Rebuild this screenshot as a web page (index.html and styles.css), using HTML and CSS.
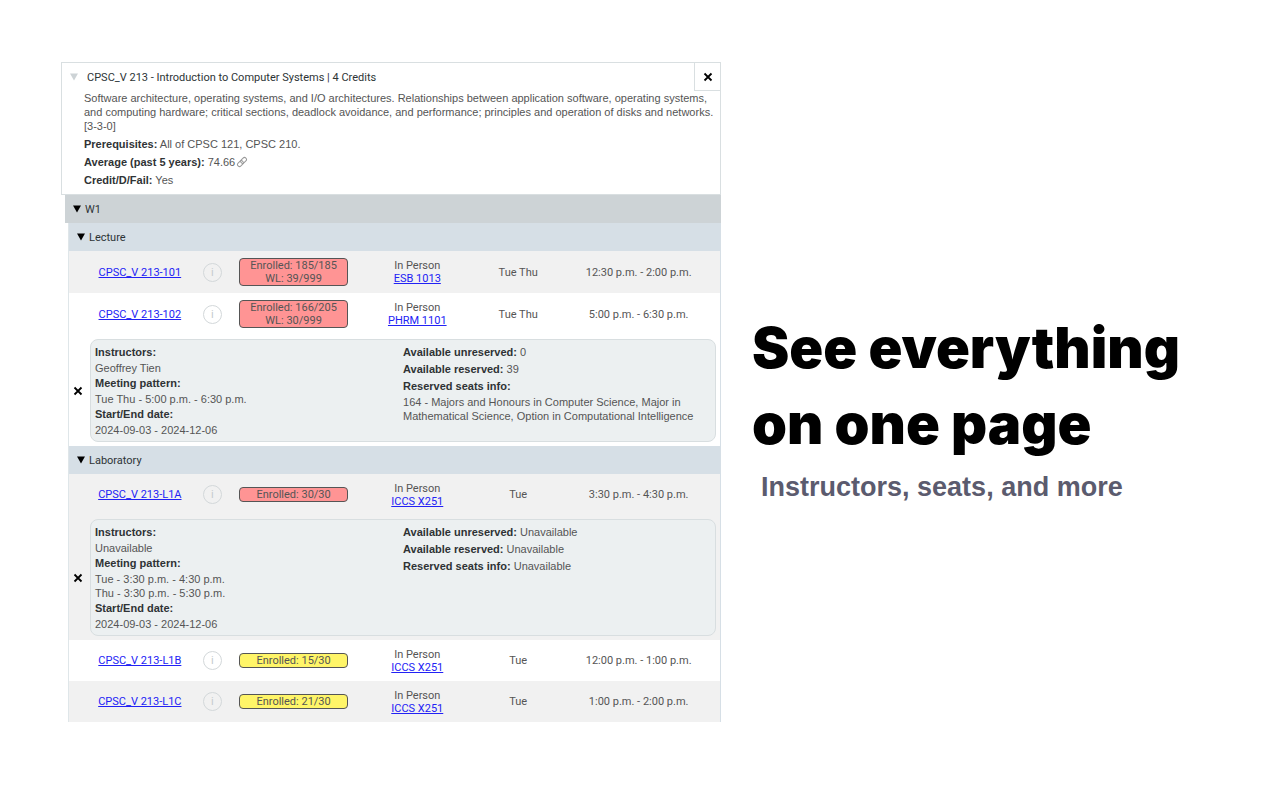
FILE: index.html
```
<!DOCTYPE html>
<html lang="en">
<head>
	<meta charset="UTF-8">
	<meta name="viewport" content="width=device-width, initial-scale=1.0">
	<title>See everything on one page</title>
	<link rel="stylesheet" href="styles.css">
</head>
<body>
	<main class="page">
		<section class="course">
			<div class="courseInfo">
				<div class="courseHead">
					<button class="toggle muted" aria-expanded="true">
						<svg class="arrow" viewBox="0 0 8 8"><path d="M0 0.5h8L4 7.5z"/></svg>
						<span>CPSC_V 213 - Introduction to Computer Systems | 4 Credits</span>
					</button>
					<button class="close" aria-label="Remove course">
						<svg class="cross" viewBox="0 0 10 10"><path d="M1.5 1.5l7 7M8.5 1.5l-7 7"/></svg>
					</button>
				</div>
				<div class="courseText">
					<p>Software architecture, operating systems, and I/O architectures. Relationships between application software, operating systems, and computing hardware; critical sections, deadlock avoidance, and performance; principles and operation of disks and networks. [3-3-0]</p>
					<p><b>Prerequisites:</b> All of CPSC 121, CPSC 210.</p>
					<p><b>Average (past 5 years):</b> 74.66<a href="#" class="chain" aria-label="Grades source"><svg viewBox="0 0 12 12"><g transform="rotate(-45 6 6)"><rect x="0.5" y="4" width="6.5" height="4" rx="2"/><rect x="5" y="4" width="6.5" height="4" rx="2"/></g></svg></a></p>
					<p><b>Credit/D/Fail:</b> Yes</p>
				</div>
			</div>

			<div class="term">
				<button class="toggle termHead" aria-expanded="true">
					<svg class="arrow" viewBox="0 0 8 8"><path d="M0 0.5h8L4 7.5z"/></svg>
					<span>W1</span>
				</button>

				<div class="group">
					<button class="toggle groupHead" aria-expanded="true">
						<svg class="arrow" viewBox="0 0 8 8"><path d="M0 0.5h8L4 7.5z"/></svg>
						<span>Lecture</span>
					</button>
					<table class="sections">
						<colgroup><col class="colName"><col class="colInfo"><col class="colSeats"><col class="colPlace"><col class="colDays"><col class="colTime"></colgroup>
						<tbody>
							<tr class="odd">
								<td class="name"><a href="#">CPSC_V 213-101</a></td>
								<td><button class="info" aria-label="Section info">i</button></td>
								<td><div class="seats full">Enrolled: 185/185<br>WL: 39/999</div></td>
								<td>In Person<br><a href="#">ESB 1013</a></td>
								<td>Tue Thu</td>
								<td>12:30 p.m. - 2:00 p.m.</td>
							</tr>
							<tr>
								<td class="name"><a href="#">CPSC_V 213-102</a></td>
								<td><button class="info" aria-label="Section info">i</button></td>
								<td><div class="seats full">Enrolled: 166/205<br>WL: 30/999</div></td>
								<td>In Person<br><a href="#">PHRM 1101</a></td>
								<td>Tue Thu</td>
								<td>5:00 p.m. - 6:30 p.m.</td>
							</tr>
							<tr class="more">
								<td colspan="6">
									<div class="details">
										<button class="hide" aria-label="Close details">
											<svg class="cross" viewBox="0 0 10 10"><path d="M1.5 1.5l7 7M8.5 1.5l-7 7"/></svg>
										</button>
										<div class="card">
											<div>
												<h4>Instructors:</h4>
												<p>Geoffrey Tien</p>
												<h4>Meeting pattern:</h4>
												<p>Tue Thu - 5:00 p.m. - 6:30 p.m.</p>
												<h4>Start/End date:</h4>
												<p>2024-09-03 - 2024-12-06</p>
											</div>
											<div>
												<p class="line"><b>Available unreserved:</b> 0</p>
												<p class="line"><b>Available reserved:</b> 39</p>
												<h4>Reserved seats info:</h4>
												<p>164 - Majors and Honours in Computer Science, Major in Mathematical Science, Option in Computational Intelligence</p>
											</div>
										</div>
									</div>
								</td>
							</tr>
						</tbody>
					</table>
				</div>

				<div class="group">
					<button class="toggle groupHead" aria-expanded="true">
						<svg class="arrow" viewBox="0 0 8 8"><path d="M0 0.5h8L4 7.5z"/></svg>
						<span>Laboratory</span>
					</button>
					<table class="sections labs">
						<colgroup><col class="colName"><col class="colInfo"><col class="colSeats"><col class="colPlace"><col class="colDays"><col class="colTime"></colgroup>
						<tbody>
							<tr class="odd">
								<td class="name"><a href="#">CPSC_V 213-L1A</a></td>
								<td><button class="info" aria-label="Section info">i</button></td>
								<td><div class="seats full">Enrolled: 30/30</div></td>
								<td>In Person<br><a href="#">ICCS X251</a></td>
								<td>Tue</td>
								<td>3:30 p.m. - 4:30 p.m.</td>
							</tr>
							<tr class="more odd">
								<td colspan="6">
									<div class="details">
										<button class="hide" aria-label="Close details">
											<svg class="cross" viewBox="0 0 10 10"><path d="M1.5 1.5l7 7M8.5 1.5l-7 7"/></svg>
										</button>
										<div class="card">
											<div>
												<h4>Instructors:</h4>
												<p>Unavailable</p>
												<h4>Meeting pattern:</h4>
												<p>Tue - 3:30 p.m. - 4:30 p.m.<br>Thu - 3:30 p.m. - 5:30 p.m.</p>
												<h4>Start/End date:</h4>
												<p>2024-09-03 - 2024-12-06</p>
											</div>
											<div>
												<p class="line"><b>Available unreserved:</b> Unavailable</p>
												<p class="line"><b>Available reserved:</b> Unavailable</p>
												<p class="line"><b>Reserved seats info:</b> Unavailable</p>
											</div>
										</div>
									</div>
								</td>
							</tr>
							<tr>
								<td class="name"><a href="#">CPSC_V 213-L1B</a></td>
								<td><button class="info" aria-label="Section info">i</button></td>
								<td><div class="seats open">Enrolled: 15/30</div></td>
								<td>In Person<br><a href="#">ICCS X251</a></td>
								<td>Tue</td>
								<td>12:00 p.m. - 1:00 p.m.</td>
							</tr>
							<tr class="odd">
								<td class="name"><a href="#">CPSC_V 213-L1C</a></td>
								<td><button class="info" aria-label="Section info">i</button></td>
								<td><div class="seats open">Enrolled: 21/30</div></td>
								<td>In Person<br><a href="#">ICCS X251</a></td>
								<td>Tue</td>
								<td>1:00 p.m. - 2:00 p.m.</td>
							</tr>
						</tbody>
					</table>
				</div>
			</div>
		</section>

		<section class="pitch">
			<h1>See everything on one page</h1>
			<p>Instructors, seats, and more</p>
		</section>
	</main>
</body>
</html>
```
FILE: styles.css
```
*{
	box-sizing: border-box;
}
body{
	margin: 0;
	background: #fff;
	font-family: Roboto, sans-serif;
	font-size: 11px;
	color: #555;
}
h1,h4,p{
	margin: 0;
}
button{
	margin: 0;
	padding: 0;
	border: 0;
	background: none;
	font: inherit;
	color: inherit;
	cursor: pointer;
}
a{
	color: #2222f5;
}
.page{
	display: grid;
	grid-template-columns: 57% 1fr;
	gap: 31px;
	align-items: center;
	padding: 62px 61px;
}

/* course header */
.courseInfo{
	border: 1px solid #d9dfe1;
	padding-bottom: 7px;
}
.courseHead{
	display: flex;
	justify-content: space-between;
	height: 28px;
}
.toggle{
	display: flex;
	align-items: center;
	gap: 4px;
	text-align: left;
	color: #2d3436;
}
.arrow{
	width: 8px;
	height: 8px;
	fill: #000;
}
.muted{
	gap: 9px;
	padding-left: 8px;
}
.muted .arrow{
	fill: #cdd3d6;
}
.close{
	display: flex;
	align-items: center;
	justify-content: center;
	width: 26px;
	border-left: 1px solid #d9dfe1;
	border-bottom: 1px solid #d9dfe1;
}
.cross{
	width: 10px;
	height: 10px;
	fill: none;
	stroke: #000;
	stroke-width: 1.8;
}
.courseText{
	padding: 0 2px 0 22px;
	font-family: "Liberation Sans", sans-serif;
	line-height: 14px;
}
.courseText p + p{
	margin-top: 4px;
}
b,h4{
	font-weight: 700;
	color: #2f3335;
}
.chain svg{
	width: 12px;
	height: 12px;
	margin-left: 1px;
	vertical-align: -2px;
	fill: none;
	stroke: #999;
}

/* term and activity groups */
.term{
	padding-left: 4px;
}
.termHead{
	width: 100%;
	height: 28px;
	padding-left: 8px;
	background: #cdd3d6;
}
.group{
	margin-left: 3px;
	border-right: 1px solid #d6dfe6;
	border-left: 1px solid #dfe6e9;
}
.groupHead{
	width: 100%;
	height: 28px;
	padding-left: 8px;
	background: #d6dfe6;
}

/* section rows */
.sections{
	width: 100%;
	table-layout: fixed;
	border-collapse: collapse;
}
.colName{width: 19%;}
.colInfo{width: 6%;}
.colSeats{width: 19%;}
.colPlace{width: 19%;}
.colDays{width: 12%;}
.colTime{width: 25%;}
.sections td{
	height: 42px;
	padding: 0;
	text-align: center;
	line-height: 13px;
}
.labs td{
	height: 41px;
}
.sections td.name{
	padding-left: 18px;
}
.odd{
	background: #f1f1f1;
}
.info{
	width: 19px;
	height: 19px;
	border: 1px solid #d3d8da;
	border-radius: 50%;
	color: #c5cbce;
}
.seats{
	margin: 0 7px;
	border: 1px solid #555;
	border-radius: 4px;
}
.full{
	background: #ff9494;
}
.open{
	background: #fff568;
}

/* expanded section */
.sections .more td{
	height: auto;
	padding: 4px 4px 4px 0;
	text-align: left;
}
.details{
	display: flex;
}
.hide{
	display: flex;
	align-items: center;
	width: 21px;
	padding-left: 4px;
}
.card{
	flex: 1;
	display: grid;
	grid-template-columns: 1fr 1fr;
	padding: 4px;
	border: 1px solid #d8dee0;
	border-radius: 8px;
	background: #ecf0f1;
	font-family: "Liberation Sans", sans-serif;
}
.card p{
	line-height: 14px;
}
.card h4,
.card .line{
	font-size: 11px;
	line-height: 17px;
}

/* headline */
.pitch{
	padding-top: 38px;
}
.pitch h1{
	font-family: Inter, "Arial Black", sans-serif;
	font-size: 56px;
	font-weight: 900;
	line-height: 76px;
	color: #000;
}
.pitch p{
	padding: 8px 9px;
	font-family: "Liberation Sans", sans-serif;
	font-size: 27px;
	font-weight: 700;
	line-height: 34px;
	color: #5b5b6e;
}
```
